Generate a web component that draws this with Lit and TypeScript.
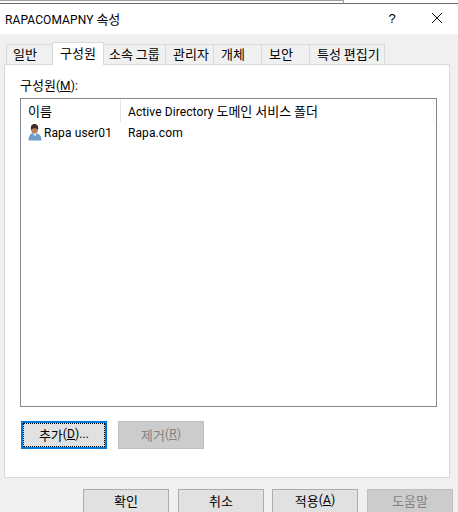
import { LitElement, html, css } from 'lit';

class AppRoot extends LitElement {
  static styles = css`
    :host {
      display: block;
      width: 458px;
      height: 512px;
      overflow: hidden;
      background: #f0f0f0;
      color: #000;
      font-family: 'Noto Sans CJK KR', 'Noto Sans', sans-serif;
      font-size: 13px;
    }
    u { text-underline-offset: 1px; }
    .l { font-family: Roboto, 'Noto Sans', sans-serif; font-size: 12px; letter-spacing: 0.1px; }
    .behind {
      display: flex;
      height: 3px;
      background: #fff;
    }
    .behind .old {
      width: 343px;
      height: 2px;
      border-top: 1px solid #a0a0a0;
      border-right: 1px solid #a0a0a0;
    }
    .titlebar {
      display: flex;
      align-items: center;
      height: 30px;
      border-top: 1px solid #6e6e6e;
      background: #fff;
      padding-left: 5px;
    }
    .titlebar .name { flex: 1; padding-bottom: 2px; white-space: pre; }
    .help { width: 16px; text-align: center; font-family: 'Liberation Sans', sans-serif; font-size: 13px; margin-right: 31px; padding-bottom: 2px; }
    .close { width: 12px; height: 12px; margin-right: 15px; margin-bottom: 2px; }
    .close svg { display: block; }
    .body { padding: 8px 8px 0 4px; }
    .tabs {
      display: flex;
      align-items: flex-end;
      height: 23px;
      padding-left: 2px;
      margin-bottom: -1px;
      position: relative;
      z-index: 1;
    }
    .tab {
      height: 21px;
      box-sizing: border-box;
      border: 1px solid #d9d9d9;
      border-left: none;
      background: #f0f0f0;
      display: flex;
      align-items: center;
      white-space: nowrap;
      padding: 0 0 2px 7px;
    }
    .tab:first-child { border-left: 1px solid #d9d9d9; padding-left: 6px; }
    .tab.after-active { padding-left: 5px; }
    .tab.active {
      height: 23px;
      background: #fff;
      border-bottom: none;
      border-left: 1px solid #d9d9d9;
      margin-left: -1px;
      padding: 0 0 4px 7px;
    }
    .panel {
      box-sizing: border-box;
      width: 446px;
      height: 414px;
      background: #fff;
      border: 1px solid #d9d9d9;
      padding: 12px 12px 0 15px;
    }
    .label { height: 21px; line-height: 16px; }
    .list {
      box-sizing: border-box;
      width: 417px;
      height: 309px;
      border: 1px solid #828790;
      background: #fff;
    }
    .head {
      display: grid;
      grid-template-columns: 100px 1fr;
      height: 23px;
      align-items: center;
    }
    .head span.col { padding-left: 7px; border-right: 1px solid #e5e5e5; height: 22px; line-height: 22px; white-space: nowrap; }
    .head span.col:last-child { border-right: 1px solid #f0f0f0; margin-right: 2px; }
    .row {
      display: grid;
      grid-template-columns: 100px 1fr;
      height: 21px;
      align-items: center;
    }
    .row .cell { display: flex; align-items: center; padding-left: 7px; gap: 2px; white-space: nowrap; }
    .actions { display: flex; gap: 11px; margin-top: 14px; padding-left: 1px; }
    .btn {
      box-sizing: border-box;
      width: 86px;
      height: 28px;
      border: 1px solid #adadad;
      background: #e1e1e1;
      display: flex;
      align-items: center;
      justify-content: center;
      padding-bottom: 2px;
      white-space: pre;
    }
    .btn.focus {
      border: 2px solid #0078d7;
      outline: 1px dotted #000;
      outline-offset: -3px;
    }
    .btn.off { background: #cccccc; border-color: #bfbfbf; color: #838383; }
    .footer { display: flex; justify-content: flex-end; gap: 9px; margin-top: 11px; margin-right: -3px; }
    .footer .btn { padding-bottom: 6px; }
    .footer .btn.tight { margin-left: -1px; }
  `;

  render() {
    return html`
      <div class="behind"><div class="old"></div></div>
      <div class="titlebar">
        <span class="name"><span class="l">RAPACOMAPNY</span> 속성</span>
        <span class="help">?</span>
        <span class="close">
          <svg width="12" height="12" viewBox="0 0 12 12"><path d="M1 1l10 10M11 1L1 11" stroke="#111" fill="none"/></svg>
        </span>
      </div>
      <div class="body">
        <div class="tabs">
          <div class="tab" style="width:47px">일반</div>
          <div class="tab active" style="width:52px">구성원</div>
          <div class="tab after-active" style="width:62px">소속 그룹</div>
          <div class="tab" style="width:48px">관리자</div>
          <div class="tab" style="width:48px">개체</div>
          <div class="tab" style="width:48px">보안</div>
          <div class="tab" style="width:75px">특성 편집기</div>
        </div>
        <div class="panel">
          <div class="label">구성원<span class="l">(<u>M</u>):</span></div>
          <div class="list">
            <div class="head">
              <span class="col">이름</span>
              <span class="col"><span class="l">Active Directory</span> 도메인 서비스 폴더</span>
            </div>
            <div class="row">
              <div class="cell">
                <svg width="14" height="17" viewBox="0 0 14 17">
                  <path d="M.5 16.500c0-4.500 2-7 4-7.500h4c2.500.5 5 3 5 7.500z" fill="#6f9dc8"/>
                  <path d="M4.500 9l2.500 3.500L9.500 9z" fill="#d5e3ef"/>
                  <ellipse cx="6.500" cy="5" rx="3.500" ry="4.500" fill="#b5825f"/>
                  <path d="M3 6C2 1.500 4.500 0 6.500 0S11 1.500 10 6C9 3.500 4.500 3.500 3 6z" fill="#3d3029"/>
                </svg>
                <span class="l">Rapa user01</span>
              </div>
              <div class="cell"><span class="l">Rapa.com</span></div>
            </div>
          </div>
          <div class="actions">
            <div class="btn focus"><span>추가</span><span class="l">(<u>D</u>)...</span></div>
            <div class="btn off"><span>제거</span><span class="l">(<u>R</u>)</span></div>
          </div>
        </div>
        <div class="footer">
          <div class="btn">확인</div>
          <div class="btn">취소</div>
          <div class="btn tight"><span>적용</span><span class="l">(<u>A</u>)</span></div>
          <div class="btn off">도움말</div>
        </div>
      </div>
    `;
  }
}

customElements.define('app-root', AppRoot);
